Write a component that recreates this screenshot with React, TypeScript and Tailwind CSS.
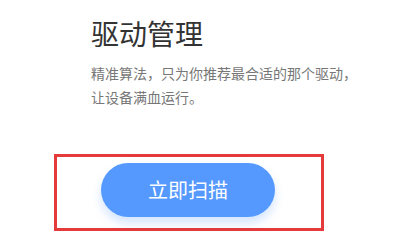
const App = () => {
  return (
    <div className="w-[406px] h-[252px] bg-white overflow-hidden" style={{ fontFamily: '"Noto Sans CJK SC", "Noto Sans", sans-serif' }}>
      <div className="pl-[91px] pt-[13px]">
        <h1 className="text-[28px] leading-[40px] text-[#333333] font-normal">驱动管理</h1>
        <p className="mt-[8px] text-[14px] leading-[24px] text-[#777777]">
          精准算法，只为你推荐最合适的那个驱动，
          <br />
          让设备满血运行。
        </p>
      </div>
      <div className="ml-[54px] mt-[45px] w-[270px] h-[77px] border-[3px] border-[#e53a3a] flex items-center justify-center">
        <button className="w-[174px] h-[54px] rounded-full bg-[#5599ff] text-white text-[20px] shadow-[0_6px_10px_rgba(85,153,255,0.25)] mb-[6px] mr-[2px]">
          立即扫描
        </button>
      </div>
    </div>
  );
};

export default App;
